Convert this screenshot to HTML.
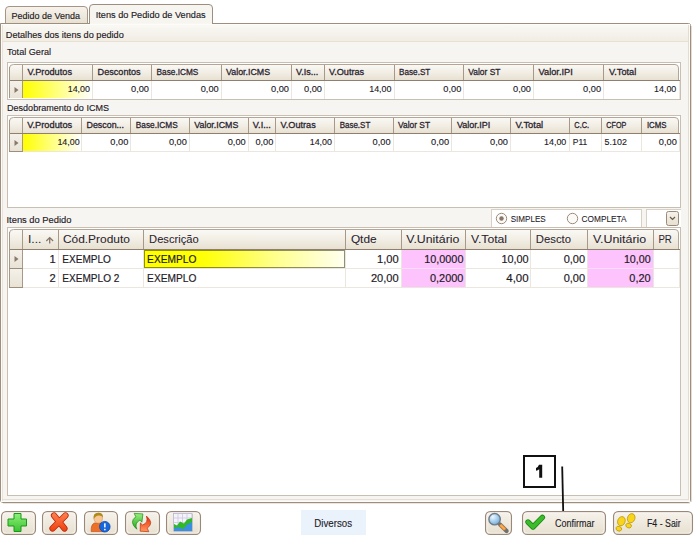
<!DOCTYPE html><html><head><meta charset="utf-8"><style>html,body{margin:0;padding:0;background:#fff;width:700px;height:545px;overflow:hidden}svg{display:block}text{font-family:"Liberation Sans",sans-serif}</style></head><body>
<svg width="700" height="545" viewBox="0 0 700 545">
<defs>
<linearGradient id="tabg" x1="0" y1="0" x2="0" y2="1"><stop offset="0" stop-color="#f7f4ee"/><stop offset="1" stop-color="#e7e0d1"/></linearGradient>
<linearGradient id="hdrband" x1="0" y1="0" x2="0" y2="1"><stop offset="0" stop-color="#faf9f5"/><stop offset="1" stop-color="#f1ede4"/></linearGradient>
<linearGradient id="ghdr" x1="0" y1="0" x2="0" y2="1"><stop offset="0" stop-color="#faf9f5"/><stop offset="0.5" stop-color="#f2eee5"/><stop offset="1" stop-color="#e7e0d0"/></linearGradient>
<linearGradient id="ind" x1="0" y1="0" x2="0" y2="1"><stop offset="0" stop-color="#f4f1ea"/><stop offset="1" stop-color="#e8e2d4"/></linearGradient>
<linearGradient id="yel" x1="0" y1="0" x2="1" y2="0"><stop offset="0" stop-color="#ffff00"/><stop offset="1" stop-color="#ffffff"/></linearGradient>
<linearGradient id="btn" x1="0" y1="0" x2="0" y2="1"><stop offset="0" stop-color="#f6f3ec"/><stop offset="1" stop-color="#e7e0d0"/></linearGradient>
<linearGradient id="grn" x1="0" y1="0" x2="0" y2="1"><stop offset="0" stop-color="#8ef07a"/><stop offset="1" stop-color="#3cc232"/></linearGradient>
<linearGradient id="red" gradientUnits="userSpaceOnUse" x1="0" y1="513" x2="0" y2="532"><stop offset="0" stop-color="#ff8050"/><stop offset="1" stop-color="#ee3c0c"/></linearGradient>
</defs>
<path d="M5.5,23.5 V10 Q5.5,6.5 9,6.5 H84 Q87.5,6.5 87.5,10 V23.5" fill="url(#tabg)" stroke="#a69484"/>
<rect x="691" y="26" width="1" height="476" fill="#e4ddd4"/>
<rect x="3" y="503" width="687" height="1" fill="#ebe6de"/>
<path d="M0.5,23.5 H688.5 Q690.5,23.5 690.5,25.5 V500 Q690.5,502.5 688,502.5 H3 Q0.5,502.5 0.5,500 Z" fill="#f7f5f1" stroke="#9d8e80"/>
<rect x="1" y="24" width="1" height="478" fill="#fdfcfa"/>
<rect x="2" y="24" width="1" height="477" fill="#e9e3d8"/>
<rect x="689" y="24" width="1" height="478" fill="#fdfcfa"/>
<rect x="688" y="24" width="1" height="476" fill="#e4dccf"/>
<rect x="2" y="501" width="687" height="1" fill="#fdfcfa"/>
<rect x="2" y="499" width="687" height="1" fill="#e6dfd3"/>
<path d="M89.5,24 V8 Q89.5,4.5 93,4.5 H209 Q212.5,4.5 212.5,8 V24" fill="#f7f5f0" stroke="#9d8e80"/>
<rect x="90" y="23" width="122" height="2" fill="#f8f7f2" />
<text x="11.5" y="19" font-size="9.6" text-anchor="start" fill="#1e1a26" font-weight="normal" textLength="68.5" lengthAdjust="spacingAndGlyphs" stroke="#1e1a26" stroke-width="0.15">Pedido de Venda</text>
<text x="95.7" y="18.2" font-size="9.6" text-anchor="start" fill="#1e1a26" font-weight="normal" textLength="110" lengthAdjust="spacingAndGlyphs" stroke="#1e1a26" stroke-width="0.15">Itens do Pedido de Vendas</text>
<rect x="3" y="24" width="685" height="17" fill="url(#hdrband)" />
<rect x="1" y="24" width="689" height="1" fill="#fdfcfa"/>
<rect x="3" y="41" width="685" height="1" fill="#e8e1d2"/>
<text x="5.8" y="37.8" font-size="9.6" text-anchor="start" fill="#1e1a26" font-weight="normal" textLength="118" lengthAdjust="spacingAndGlyphs" stroke="#1e1a26" stroke-width="0.15">Detalhes dos itens do pedido</text>
<text x="7" y="55.2" font-size="9.8" text-anchor="start" fill="#1e1a26" font-weight="normal" textLength="44" lengthAdjust="spacingAndGlyphs" stroke="#1e1a26" stroke-width="0.15">Total Geral</text>
<text x="7" y="110.5" font-size="9.6" text-anchor="start" fill="#1e1a26" font-weight="normal" textLength="102" lengthAdjust="spacingAndGlyphs" stroke="#1e1a26" stroke-width="0.15">Desdobramento do ICMS</text>
<text x="6.5" y="222.7" font-size="9.6" text-anchor="start" fill="#1e1a26" font-weight="normal" textLength="65" lengthAdjust="spacingAndGlyphs" stroke="#1e1a26" stroke-width="0.15">Itens do Pedido</text>
<rect x="23" y="81" width="69" height="17" fill="url(#yel)" />
<rect x="7" y="62" width="674" height="38" fill="#ffffff" />
<rect x="7" y="62" width="674" height="1" fill="#c9beb2"/>
<rect x="7" y="62" width="1" height="38" fill="#c9beb2"/>
<rect x="7" y="99" width="674" height="1" fill="#c9beb2"/>
<rect x="680" y="62" width="1" height="38" fill="#c9beb2"/>
<path d="M9.5,80.5 V68 Q9.5,64.5 13.5,64.5 H675 Q678.5,64.5 678.5,68 V80.5 Z" fill="url(#ghdr)" stroke="#b4a696"/>
<rect x="9" y="80" width="671" height="1" fill="#8f7f70"/>
<rect x="22" y="65" width="1" height="15" fill="#a89888"/>
<rect x="92" y="65" width="1" height="15" fill="#a89888"/>
<rect x="151" y="65" width="1" height="15" fill="#a89888"/>
<rect x="221" y="65" width="1" height="15" fill="#a89888"/>
<rect x="291" y="65" width="1" height="15" fill="#a89888"/>
<rect x="324" y="65" width="1" height="15" fill="#a89888"/>
<rect x="394" y="65" width="1" height="15" fill="#a89888"/>
<rect x="463" y="65" width="1" height="15" fill="#a89888"/>
<rect x="533" y="65" width="1" height="15" fill="#a89888"/>
<rect x="603" y="65" width="1" height="15" fill="#a89888"/>
<rect x="9" y="67" width="1" height="31" fill="#a89888"/>
<rect x="10" y="81" width="12" height="18" fill="url(#ind)" />
<rect x="22" y="81" width="1" height="18" fill="#a89888"/>
<rect x="9" y="98" width="14" height="1" fill="#ffffff"/>
<rect x="23" y="98" width="656" height="1" fill="#ffffff"/>
<rect x="92" y="81" width="1" height="18" fill="#ebe7de"/>
<rect x="151" y="81" width="1" height="18" fill="#ebe7de"/>
<rect x="221" y="81" width="1" height="18" fill="#ebe7de"/>
<rect x="291" y="81" width="1" height="18" fill="#ebe7de"/>
<rect x="324" y="81" width="1" height="18" fill="#ebe7de"/>
<rect x="394" y="81" width="1" height="18" fill="#ebe7de"/>
<rect x="463" y="81" width="1" height="18" fill="#ebe7de"/>
<rect x="533" y="81" width="1" height="18" fill="#ebe7de"/>
<rect x="603" y="81" width="1" height="18" fill="#ebe7de"/>
<rect x="679" y="81" width="1" height="18" fill="#ebe7de"/>
<text x="27.4" y="75" font-size="8.5" text-anchor="start" fill="#2b2530" font-weight="normal" textLength="44.6" lengthAdjust="spacingAndGlyphs" stroke="#2b2530" stroke-width="0.28">V.Produtos</text>
<text x="97.6" y="75" font-size="8.5" text-anchor="start" fill="#2b2530" font-weight="normal" textLength="43" lengthAdjust="spacingAndGlyphs" stroke="#2b2530" stroke-width="0.28">Descontos</text>
<text x="156.6" y="75" font-size="8.5" text-anchor="start" fill="#2b2530" font-weight="normal" textLength="41.7" lengthAdjust="spacingAndGlyphs" stroke="#2b2530" stroke-width="0.28">Base.ICMS</text>
<text x="226.1" y="75" font-size="8.5" text-anchor="start" fill="#2b2530" font-weight="normal" textLength="44" lengthAdjust="spacingAndGlyphs" stroke="#2b2530" stroke-width="0.28">Valor.ICMS</text>
<text x="296" y="75" font-size="8.5" text-anchor="start" fill="#2b2530" font-weight="normal" textLength="22.3" lengthAdjust="spacingAndGlyphs" stroke="#2b2530" stroke-width="0.28">V.Is...</text>
<text x="328.9" y="75" font-size="8.5" text-anchor="start" fill="#2b2530" font-weight="normal" textLength="35.3" lengthAdjust="spacingAndGlyphs" stroke="#2b2530" stroke-width="0.28">V.Outras</text>
<text x="399.1" y="75" font-size="8.5" text-anchor="start" fill="#2b2530" font-weight="normal" textLength="31.2" lengthAdjust="spacingAndGlyphs" stroke="#2b2530" stroke-width="0.28">Base.ST</text>
<text x="468.3" y="75" font-size="8.5" text-anchor="start" fill="#2b2530" font-weight="normal" textLength="32.2" lengthAdjust="spacingAndGlyphs" stroke="#2b2530" stroke-width="0.28">Valor ST</text>
<text x="538.5" y="75" font-size="8.5" text-anchor="start" fill="#2b2530" font-weight="normal" textLength="34.3" lengthAdjust="spacingAndGlyphs" stroke="#2b2530" stroke-width="0.28">Valor.IPI</text>
<text x="608.9" y="75" font-size="8.5" text-anchor="start" fill="#2b2530" font-weight="normal" textLength="27.4" lengthAdjust="spacingAndGlyphs" stroke="#2b2530" stroke-width="0.28">V.Total</text>
<rect x="23" y="81" width="69" height="17" fill="url(#yel)" />
<path d="M14.5,87 L18.5,90 L14.5,93 Z" fill="#8a7868"/>
<text x="90" y="92" font-size="9" text-anchor="end" fill="#1e1a26" font-weight="normal" textLength="22.3" lengthAdjust="spacingAndGlyphs" stroke="#1e1a26" stroke-width="0.12">14,00</text>
<text x="149" y="92" font-size="9" text-anchor="end" fill="#1e1a26" font-weight="normal" textLength="18" lengthAdjust="spacingAndGlyphs" stroke="#1e1a26" stroke-width="0.12">0,00</text>
<text x="218.7" y="92" font-size="9" text-anchor="end" fill="#1e1a26" font-weight="normal" textLength="18" lengthAdjust="spacingAndGlyphs" stroke="#1e1a26" stroke-width="0.12">0,00</text>
<text x="289" y="92" font-size="9" text-anchor="end" fill="#1e1a26" font-weight="normal" textLength="18" lengthAdjust="spacingAndGlyphs" stroke="#1e1a26" stroke-width="0.12">0,00</text>
<text x="322" y="92" font-size="9" text-anchor="end" fill="#1e1a26" font-weight="normal" textLength="18" lengthAdjust="spacingAndGlyphs" stroke="#1e1a26" stroke-width="0.12">0,00</text>
<text x="391.5" y="92" font-size="9" text-anchor="end" fill="#1e1a26" font-weight="normal" textLength="22.3" lengthAdjust="spacingAndGlyphs" stroke="#1e1a26" stroke-width="0.12">14,00</text>
<text x="461.3" y="92" font-size="9" text-anchor="end" fill="#1e1a26" font-weight="normal" textLength="18" lengthAdjust="spacingAndGlyphs" stroke="#1e1a26" stroke-width="0.12">0,00</text>
<text x="531" y="92" font-size="9" text-anchor="end" fill="#1e1a26" font-weight="normal" textLength="18" lengthAdjust="spacingAndGlyphs" stroke="#1e1a26" stroke-width="0.12">0,00</text>
<text x="601.1" y="92" font-size="9" text-anchor="end" fill="#1e1a26" font-weight="normal" textLength="18" lengthAdjust="spacingAndGlyphs" stroke="#1e1a26" stroke-width="0.12">0,00</text>
<text x="676.3" y="92" font-size="9" text-anchor="end" fill="#1e1a26" font-weight="normal" textLength="22.3" lengthAdjust="spacingAndGlyphs" stroke="#1e1a26" stroke-width="0.12">14,00</text>
<rect x="7" y="115" width="674" height="93" fill="#ffffff" />
<rect x="7" y="115" width="674" height="1" fill="#c9beb2"/>
<rect x="7" y="115" width="1" height="93" fill="#c9beb2"/>
<rect x="7" y="207" width="674" height="1" fill="#c9beb2"/>
<rect x="680" y="115" width="1" height="93" fill="#c9beb2"/>
<path d="M9.5,133.5 V121 Q9.5,117.5 13.5,117.5 H675 Q678.5,117.5 678.5,121 V133.5 Z" fill="url(#ghdr)" stroke="#b4a696"/>
<rect x="9" y="133" width="671" height="1" fill="#8f7f70"/>
<rect x="22" y="118" width="1" height="15" fill="#a89888"/>
<rect x="81" y="118" width="1" height="15" fill="#a89888"/>
<rect x="130" y="118" width="1" height="15" fill="#a89888"/>
<rect x="189" y="118" width="1" height="15" fill="#a89888"/>
<rect x="248" y="118" width="1" height="15" fill="#a89888"/>
<rect x="275" y="118" width="1" height="15" fill="#a89888"/>
<rect x="334" y="118" width="1" height="15" fill="#a89888"/>
<rect x="393" y="118" width="1" height="15" fill="#a89888"/>
<rect x="451" y="118" width="1" height="15" fill="#a89888"/>
<rect x="510" y="118" width="1" height="15" fill="#a89888"/>
<rect x="569" y="118" width="1" height="15" fill="#a89888"/>
<rect x="601" y="118" width="1" height="15" fill="#a89888"/>
<rect x="641" y="118" width="1" height="15" fill="#a89888"/>
<rect x="9" y="120" width="1" height="32" fill="#a89888"/>
<rect x="10" y="134" width="12" height="18" fill="url(#ind)" />
<rect x="22" y="134" width="1" height="18" fill="#a89888"/>
<rect x="9" y="151" width="14" height="1" fill="#9d8d7d"/>
<rect x="23" y="151" width="656" height="1" fill="#ebe7de"/>
<rect x="81" y="134" width="1" height="18" fill="#ebe7de"/>
<rect x="130" y="134" width="1" height="18" fill="#ebe7de"/>
<rect x="189" y="134" width="1" height="18" fill="#ebe7de"/>
<rect x="248" y="134" width="1" height="18" fill="#ebe7de"/>
<rect x="275" y="134" width="1" height="18" fill="#ebe7de"/>
<rect x="334" y="134" width="1" height="18" fill="#ebe7de"/>
<rect x="393" y="134" width="1" height="18" fill="#ebe7de"/>
<rect x="451" y="134" width="1" height="18" fill="#ebe7de"/>
<rect x="510" y="134" width="1" height="18" fill="#ebe7de"/>
<rect x="569" y="134" width="1" height="18" fill="#ebe7de"/>
<rect x="601" y="134" width="1" height="18" fill="#ebe7de"/>
<rect x="641" y="134" width="1" height="18" fill="#ebe7de"/>
<rect x="679" y="134" width="1" height="18" fill="#ebe7de"/>
<text x="27.2" y="128" font-size="8.5" text-anchor="start" fill="#2b2530" font-weight="normal" textLength="45" lengthAdjust="spacingAndGlyphs" stroke="#2b2530" stroke-width="0.28">V.Produtos</text>
<text x="86.5" y="128" font-size="8.5" text-anchor="start" fill="#2b2530" font-weight="normal" textLength="37.5" lengthAdjust="spacingAndGlyphs" stroke="#2b2530" stroke-width="0.28">Descon...</text>
<text x="135.8" y="128" font-size="8.5" text-anchor="start" fill="#2b2530" font-weight="normal" textLength="41.9" lengthAdjust="spacingAndGlyphs" stroke="#2b2530" stroke-width="0.28">Base.ICMS</text>
<text x="194.3" y="128" font-size="8.5" text-anchor="start" fill="#2b2530" font-weight="normal" textLength="44" lengthAdjust="spacingAndGlyphs" stroke="#2b2530" stroke-width="0.28">Valor.ICMS</text>
<text x="252.8" y="128" font-size="8.5" text-anchor="start" fill="#2b2530" font-weight="normal" textLength="18.1" lengthAdjust="spacingAndGlyphs" stroke="#2b2530" stroke-width="0.28">V.I...</text>
<text x="280.6" y="128" font-size="8.5" text-anchor="start" fill="#2b2530" font-weight="normal" textLength="35.1" lengthAdjust="spacingAndGlyphs" stroke="#2b2530" stroke-width="0.28">V.Outras</text>
<text x="339.7" y="128" font-size="8.5" text-anchor="start" fill="#2b2530" font-weight="normal" textLength="30.6" lengthAdjust="spacingAndGlyphs" stroke="#2b2530" stroke-width="0.28">Base.ST</text>
<text x="398" y="128" font-size="8.5" text-anchor="start" fill="#2b2530" font-weight="normal" textLength="32" lengthAdjust="spacingAndGlyphs" stroke="#2b2530" stroke-width="0.28">Valor ST</text>
<text x="456.9" y="128" font-size="8.5" text-anchor="start" fill="#2b2530" font-weight="normal" textLength="33.4" lengthAdjust="spacingAndGlyphs" stroke="#2b2530" stroke-width="0.28">Valor.IPI</text>
<text x="515.4" y="128" font-size="8.5" text-anchor="start" fill="#2b2530" font-weight="normal" textLength="27.8" lengthAdjust="spacingAndGlyphs" stroke="#2b2530" stroke-width="0.28">V.Total</text>
<text x="574.3" y="128" font-size="8.5" text-anchor="start" fill="#2b2530" font-weight="normal" textLength="14.8" lengthAdjust="spacingAndGlyphs" stroke="#2b2530" stroke-width="0.28">C.C.</text>
<text x="606.3" y="128" font-size="8.5" text-anchor="start" fill="#2b2530" font-weight="normal" textLength="20" lengthAdjust="spacingAndGlyphs" stroke="#2b2530" stroke-width="0.28">CFOP</text>
<text x="646.9" y="128" font-size="8.5" text-anchor="start" fill="#2b2530" font-weight="normal" textLength="19.6" lengthAdjust="spacingAndGlyphs" stroke="#2b2530" stroke-width="0.28">ICMS</text>
<rect x="23" y="134" width="58" height="17" fill="url(#yel)" />
<path d="M14.5,140 L18.5,143 L14.5,146 Z" fill="#8a7868"/>
<text x="79.7" y="145" font-size="9" text-anchor="end" fill="#1e1a26" font-weight="normal" textLength="22.3" lengthAdjust="spacingAndGlyphs" stroke="#1e1a26" stroke-width="0.12">14,00</text>
<text x="128.3" y="145" font-size="9" text-anchor="end" fill="#1e1a26" font-weight="normal" textLength="18" lengthAdjust="spacingAndGlyphs" stroke="#1e1a26" stroke-width="0.12">0,00</text>
<text x="186.9" y="145" font-size="9" text-anchor="end" fill="#1e1a26" font-weight="normal" textLength="18" lengthAdjust="spacingAndGlyphs" stroke="#1e1a26" stroke-width="0.12">0,00</text>
<text x="245.7" y="145" font-size="9" text-anchor="end" fill="#1e1a26" font-weight="normal" textLength="18" lengthAdjust="spacingAndGlyphs" stroke="#1e1a26" stroke-width="0.12">0,00</text>
<text x="273.4" y="145" font-size="9" text-anchor="end" fill="#1e1a26" font-weight="normal" textLength="18" lengthAdjust="spacingAndGlyphs" stroke="#1e1a26" stroke-width="0.12">0,00</text>
<text x="332" y="145" font-size="9" text-anchor="end" fill="#1e1a26" font-weight="normal" textLength="22.3" lengthAdjust="spacingAndGlyphs" stroke="#1e1a26" stroke-width="0.12">14,00</text>
<text x="390.6" y="145" font-size="9" text-anchor="end" fill="#1e1a26" font-weight="normal" textLength="18" lengthAdjust="spacingAndGlyphs" stroke="#1e1a26" stroke-width="0.12">0,00</text>
<text x="449.1" y="145" font-size="9" text-anchor="end" fill="#1e1a26" font-weight="normal" textLength="18" lengthAdjust="spacingAndGlyphs" stroke="#1e1a26" stroke-width="0.12">0,00</text>
<text x="508" y="145" font-size="9" text-anchor="end" fill="#1e1a26" font-weight="normal" textLength="18" lengthAdjust="spacingAndGlyphs" stroke="#1e1a26" stroke-width="0.12">0,00</text>
<text x="566.3" y="145" font-size="9" text-anchor="end" fill="#1e1a26" font-weight="normal" textLength="22.3" lengthAdjust="spacingAndGlyphs" stroke="#1e1a26" stroke-width="0.12">14,00</text>
<text x="676.8" y="145" font-size="9" text-anchor="end" fill="#1e1a26" font-weight="normal" textLength="18" lengthAdjust="spacingAndGlyphs" stroke="#1e1a26" stroke-width="0.12">0,00</text>
<text x="572.8" y="145" font-size="9" text-anchor="start" fill="#1e1a26" font-weight="normal" textLength="14.4" lengthAdjust="spacingAndGlyphs" stroke="#1e1a26" stroke-width="0.12">P11</text>
<text x="604.6" y="145" font-size="9" text-anchor="start" fill="#1e1a26" font-weight="normal" textLength="22.3" lengthAdjust="spacingAndGlyphs" stroke="#1e1a26" stroke-width="0.12">5.102</text>
<rect x="491" y="209" width="150" height="19" fill="#ffffff" />
<rect x="491" y="209" width="1" height="19" fill="#d8d0c4"/>
<rect x="491" y="209" width="151" height="1" fill="#d8d0c4"/>
<rect x="641" y="209" width="1" height="19" fill="#d8d0c4"/>
<circle cx="501.5" cy="218.5" r="5.2" fill="#fbfaf6" stroke="#9a8a7c" stroke-width="1"/>
<circle cx="501.5" cy="218.5" r="2.2" fill="#8a7666"/>
<text x="510.7" y="222" font-size="9.5" text-anchor="start" fill="#1e1a26" font-weight="normal" textLength="35" lengthAdjust="spacingAndGlyphs" stroke="#1e1a26" stroke-width="0.08">SIMPLES</text>
<circle cx="572.5" cy="218.5" r="5.2" fill="#fbfaf6" stroke="#9a8a7c" stroke-width="1"/>
<text x="581.6" y="222" font-size="9.5" text-anchor="start" fill="#1e1a26" font-weight="normal" textLength="45" lengthAdjust="spacingAndGlyphs" stroke="#1e1a26" stroke-width="0.08">COMPLETA</text>
<rect x="646" y="209" width="35" height="19" fill="#ffffff" />
<rect x="646" y="209" width="1" height="19" fill="#d8d0c4"/>
<rect x="646" y="209" width="35" height="1" fill="#d8d0c4"/>
<rect x="666.5" y="211.5" width="12" height="14" rx="2" fill="url(#btn)" stroke="#9a8a7c"/>
<path d="M670,217 L672.5,219.5 L675,217" fill="none" stroke="#6a5a4c" stroke-width="1.2"/>
<rect x="7" y="227" width="674" height="269" fill="#ffffff" />
<rect x="7" y="227" width="674" height="1" fill="#c9beb2"/>
<rect x="7" y="227" width="1" height="269" fill="#c9beb2"/>
<rect x="7" y="495" width="674" height="1" fill="#c9beb2"/>
<rect x="680" y="227" width="1" height="269" fill="#c9beb2"/>
<path d="M9.5,249.5 V233 Q9.5,229.5 13.5,229.5 H675 Q678.5,229.5 678.5,233 V249.5 Z" fill="url(#ghdr)" stroke="#b4a696"/>
<rect x="9" y="249" width="671" height="1" fill="#8f7f70"/>
<rect x="22" y="230" width="1" height="19" fill="#a89888"/>
<rect x="58" y="230" width="1" height="19" fill="#a89888"/>
<rect x="143" y="230" width="1" height="19" fill="#a89888"/>
<rect x="345" y="230" width="1" height="19" fill="#a89888"/>
<rect x="401" y="230" width="1" height="19" fill="#a89888"/>
<rect x="465" y="230" width="1" height="19" fill="#a89888"/>
<rect x="530" y="230" width="1" height="19" fill="#a89888"/>
<rect x="587" y="230" width="1" height="19" fill="#a89888"/>
<rect x="653" y="230" width="1" height="19" fill="#a89888"/>
<rect x="9" y="232" width="1" height="56" fill="#a89888"/>
<rect x="10" y="250" width="12" height="19" fill="url(#ind)" />
<rect x="22" y="250" width="1" height="19" fill="#a89888"/>
<rect x="9" y="268" width="14" height="1" fill="#9d8d7d"/>
<rect x="10" y="269" width="12" height="19" fill="url(#ind)" />
<rect x="22" y="269" width="1" height="19" fill="#a89888"/>
<rect x="9" y="287" width="14" height="1" fill="#9d8d7d"/>
<rect x="23" y="268" width="656" height="1" fill="#ebe7de"/>
<rect x="58" y="250" width="1" height="19" fill="#ebe7de"/>
<rect x="143" y="250" width="1" height="19" fill="#ebe7de"/>
<rect x="345" y="250" width="1" height="19" fill="#ebe7de"/>
<rect x="401" y="250" width="1" height="19" fill="#ebe7de"/>
<rect x="465" y="250" width="1" height="19" fill="#ebe7de"/>
<rect x="530" y="250" width="1" height="19" fill="#ebe7de"/>
<rect x="587" y="250" width="1" height="19" fill="#ebe7de"/>
<rect x="653" y="250" width="1" height="19" fill="#ebe7de"/>
<rect x="679" y="250" width="1" height="19" fill="#ebe7de"/>
<rect x="23" y="287" width="656" height="1" fill="#ebe7de"/>
<rect x="58" y="269" width="1" height="19" fill="#ebe7de"/>
<rect x="143" y="269" width="1" height="19" fill="#ebe7de"/>
<rect x="345" y="269" width="1" height="19" fill="#ebe7de"/>
<rect x="401" y="269" width="1" height="19" fill="#ebe7de"/>
<rect x="465" y="269" width="1" height="19" fill="#ebe7de"/>
<rect x="530" y="269" width="1" height="19" fill="#ebe7de"/>
<rect x="587" y="269" width="1" height="19" fill="#ebe7de"/>
<rect x="653" y="269" width="1" height="19" fill="#ebe7de"/>
<rect x="679" y="269" width="1" height="19" fill="#ebe7de"/>
<text x="28" y="243.2" font-size="11" text-anchor="start" fill="#2b2530" font-weight="normal" textLength="13.4" lengthAdjust="spacingAndGlyphs" stroke="#2b2530" stroke-width="0.06">I...</text>
<text x="62.9" y="243.2" font-size="11" text-anchor="start" fill="#2b2530" font-weight="normal" textLength="67" lengthAdjust="spacingAndGlyphs" stroke="#2b2530" stroke-width="0.06">Cód.Produto</text>
<text x="149.1" y="243.2" font-size="11" text-anchor="start" fill="#2b2530" font-weight="normal" textLength="49.5" lengthAdjust="spacingAndGlyphs" stroke="#2b2530" stroke-width="0.06">Descrição</text>
<text x="350.9" y="243.2" font-size="11" text-anchor="start" fill="#2b2530" font-weight="normal" textLength="25.7" lengthAdjust="spacingAndGlyphs" stroke="#2b2530" stroke-width="0.06">Qtde</text>
<text x="406.3" y="243.2" font-size="11" text-anchor="start" fill="#2b2530" font-weight="normal" textLength="53.1" lengthAdjust="spacingAndGlyphs" stroke="#2b2530" stroke-width="0.06">V.Unitário</text>
<text x="470.9" y="243.2" font-size="11" text-anchor="start" fill="#2b2530" font-weight="normal" textLength="36.2" lengthAdjust="spacingAndGlyphs" stroke="#2b2530" stroke-width="0.06">V.Total</text>
<text x="535.8" y="243.2" font-size="11" text-anchor="start" fill="#2b2530" font-weight="normal" textLength="35.2" lengthAdjust="spacingAndGlyphs" stroke="#2b2530" stroke-width="0.06">Descto</text>
<text x="592.9" y="243.2" font-size="11" text-anchor="start" fill="#2b2530" font-weight="normal" textLength="53.4" lengthAdjust="spacingAndGlyphs" stroke="#2b2530" stroke-width="0.06">V.Unitário</text>
<text x="658.4" y="243.2" font-size="11" text-anchor="start" fill="#2b2530" font-weight="normal" textLength="13.4" lengthAdjust="spacingAndGlyphs" stroke="#2b2530" stroke-width="0.06">PR</text>
<path d="M46.3,241 L49.7,237.6 L53.1,241 M49.7,238 V243.6" fill="none" stroke="#86766a" stroke-width="1.3"/>
<path d="M14.5,256 L18.5,259 L14.5,262 Z" fill="#8a7868"/>
<rect x="402" y="250" width="63" height="37" fill="#fcc3fc" />
<rect x="402" y="268" width="63" height="1" fill="#fbdcfb"/>
<rect x="588" y="250" width="65" height="37" fill="#fcc3fc" />
<rect x="588" y="268" width="65" height="1" fill="#fbdcfb"/>
<linearGradient id="yel3" x1="0" y1="0" x2="1" y2="0"><stop offset="0" stop-color="#ffff00"/><stop offset="0.3" stop-color="#ffff08"/><stop offset="0.65" stop-color="#ffff8c"/><stop offset="1" stop-color="#fffff2"/></linearGradient>
<rect x="144" y="250" width="201" height="18" fill="url(#yel3)" />
<rect x="144.5" y="250.5" width="200" height="17" fill="none" stroke="#202000" stroke-width="1" stroke-dasharray="1,1"/>
<text x="55.7" y="262.8" font-size="11" text-anchor="end" fill="#1e1a26" font-weight="normal" textLength="6.2" lengthAdjust="spacingAndGlyphs" stroke="#1e1a26" stroke-width="0.18">1</text>
<text x="55.7" y="281.9" font-size="11" text-anchor="end" fill="#1e1a26" font-weight="normal" textLength="6.2" lengthAdjust="spacingAndGlyphs" stroke="#1e1a26" stroke-width="0.18">2</text>
<text x="62.3" y="262.8" font-size="11" text-anchor="start" fill="#1e1a26" font-weight="normal" textLength="48.6" lengthAdjust="spacingAndGlyphs" stroke="#1e1a26" stroke-width="0.18">EXEMPLO</text>
<text x="62.3" y="281.9" font-size="11" text-anchor="start" fill="#1e1a26" font-weight="normal" textLength="57.1" lengthAdjust="spacingAndGlyphs" stroke="#1e1a26" stroke-width="0.18">EXEMPLO 2</text>
<text x="147.1" y="262.8" font-size="11" text-anchor="start" fill="#1e1a26" font-weight="normal" textLength="49.2" lengthAdjust="spacingAndGlyphs" stroke="#1e1a26" stroke-width="0.18">EXEMPLO</text>
<text x="147.1" y="281.9" font-size="11" text-anchor="start" fill="#1e1a26" font-weight="normal" textLength="49.2" lengthAdjust="spacingAndGlyphs" stroke="#1e1a26" stroke-width="0.18">EXEMPLO</text>
<text x="398.6" y="262.8" font-size="11" text-anchor="end" fill="#1e1a26" font-weight="normal" textLength="21.6" lengthAdjust="spacingAndGlyphs" stroke="#1e1a26" stroke-width="0.18">1,00</text>
<text x="398.6" y="281.9" font-size="11" text-anchor="end" fill="#1e1a26" font-weight="normal" textLength="27.7" lengthAdjust="spacingAndGlyphs" stroke="#1e1a26" stroke-width="0.18">20,00</text>
<text x="463.4" y="262.8" font-size="11" text-anchor="end" fill="#1e1a26" font-weight="normal" textLength="39.1" lengthAdjust="spacingAndGlyphs" stroke="#1e1a26" stroke-width="0.18">10,0000</text>
<text x="463.4" y="281.9" font-size="11" text-anchor="end" fill="#1e1a26" font-weight="normal" textLength="33.4" lengthAdjust="spacingAndGlyphs" stroke="#1e1a26" stroke-width="0.18">0,2000</text>
<text x="528.6" y="262.8" font-size="11" text-anchor="end" fill="#1e1a26" font-weight="normal" textLength="27.2" lengthAdjust="spacingAndGlyphs" stroke="#1e1a26" stroke-width="0.18">10,00</text>
<text x="528.6" y="281.9" font-size="11" text-anchor="end" fill="#1e1a26" font-weight="normal" textLength="22.3" lengthAdjust="spacingAndGlyphs" stroke="#1e1a26" stroke-width="0.18">4,00</text>
<text x="585.1" y="262.8" font-size="11" text-anchor="end" fill="#1e1a26" font-weight="normal" textLength="21.4" lengthAdjust="spacingAndGlyphs" stroke="#1e1a26" stroke-width="0.18">0,00</text>
<text x="585.1" y="281.9" font-size="11" text-anchor="end" fill="#1e1a26" font-weight="normal" textLength="21.4" lengthAdjust="spacingAndGlyphs" stroke="#1e1a26" stroke-width="0.18">0,00</text>
<text x="650.6" y="262.8" font-size="11" text-anchor="end" fill="#1e1a26" font-weight="normal" textLength="26.7" lengthAdjust="spacingAndGlyphs" stroke="#1e1a26" stroke-width="0.18">10,00</text>
<text x="650.6" y="281.9" font-size="11" text-anchor="end" fill="#1e1a26" font-weight="normal" textLength="21.3" lengthAdjust="spacingAndGlyphs" stroke="#1e1a26" stroke-width="0.18">0,20</text>
<rect x="1.6" y="511.6" width="33.8" height="22.8" rx="4.5" fill="url(#btn)" stroke="#9c8878" stroke-width="1.25"/>
<rect x="2.8" y="512.8" width="31.4" height="20.4" rx="3.5" fill="none" stroke="#fdfcf8" stroke-width="0.8" opacity="0.8"/>
<rect x="42.6" y="511.6" width="33.8" height="22.8" rx="4.5" fill="url(#btn)" stroke="#9c8878" stroke-width="1.25"/>
<rect x="43.8" y="512.8" width="31.4" height="20.4" rx="3.5" fill="none" stroke="#fdfcf8" stroke-width="0.8" opacity="0.8"/>
<rect x="84.6" y="511.6" width="32.8" height="22.8" rx="4.5" fill="url(#btn)" stroke="#9c8878" stroke-width="1.25"/>
<rect x="85.8" y="512.8" width="30.4" height="20.4" rx="3.5" fill="none" stroke="#fdfcf8" stroke-width="0.8" opacity="0.8"/>
<rect x="125.6" y="511.6" width="33.8" height="22.8" rx="4.5" fill="url(#btn)" stroke="#9c8878" stroke-width="1.25"/>
<rect x="126.8" y="512.8" width="31.4" height="20.4" rx="3.5" fill="none" stroke="#fdfcf8" stroke-width="0.8" opacity="0.8"/>
<rect x="166.6" y="511.6" width="33.8" height="22.8" rx="4.5" fill="url(#btn)" stroke="#9c8878" stroke-width="1.25"/>
<rect x="167.8" y="512.8" width="31.4" height="20.4" rx="3.5" fill="none" stroke="#fdfcf8" stroke-width="0.8" opacity="0.8"/>
<rect x="485.6" y="511.6" width="25.8" height="22.8" rx="4.5" fill="url(#btn)" stroke="#9c8878" stroke-width="1.25"/>
<rect x="486.8" y="512.8" width="23.4" height="20.4" rx="3.5" fill="none" stroke="#fdfcf8" stroke-width="0.8" opacity="0.8"/>
<rect x="522.6" y="511.6" width="82.8" height="22.8" rx="4.5" fill="url(#btn)" stroke="#9c8878" stroke-width="1.25"/>
<rect x="523.8" y="512.8" width="80.4" height="20.4" rx="3.5" fill="none" stroke="#fdfcf8" stroke-width="0.8" opacity="0.8"/>
<rect x="613.6" y="511.6" width="78.8" height="22.8" rx="4.5" fill="url(#btn)" stroke="#9c8878" stroke-width="1.25"/>
<rect x="614.8" y="512.8" width="76.4" height="20.4" rx="3.5" fill="none" stroke="#fdfcf8" stroke-width="0.8" opacity="0.8"/>
<path d="M14,513.5 H21 V519 H26.5 V526 H21 V531.5 H14 V526 H8 V519 H14 Z" fill="url(#grn)" stroke="#169a16" stroke-width="1"/>
<g stroke-linecap="round"><path d="M54,515.5 L64.5,528.5 M65.5,515.5 L52.5,528.5" stroke="#b82808" stroke-width="6.2" fill="none"/><path d="M54,515.5 L64.5,528.5 M65.5,515.5 L52.5,528.5" stroke="url(#red)" stroke-width="4.6" fill="none"/></g>
<path d="M91.2,531.6 Q90.8,524.4 94.5,523 L101.5,523 Q104.5,524.4 104.5,531.6 Z" fill="#ee7028" stroke="#c0501a" stroke-width="0.7"/>
<ellipse cx="98.2" cy="518.2" rx="4.3" ry="5" fill="#f9c592" stroke="#c98a50" stroke-width="0.5"/>
<path d="M93.8,519 Q92.6,512.8 98.4,512.8 Q103.6,512.8 102.8,517.5 Q101.8,515.2 98.6,515.4 Q95.6,515.6 93.8,519 Z" fill="#b08a18"/>
<circle cx="104.8" cy="526.7" r="5.3" fill="#1668dc" stroke="#0c48a8" stroke-width="0.8"/>
<rect x="104.1" y="523.3" width="1.5" height="4.1" fill="#fff"/><rect x="104.1" y="528.8" width="1.5" height="1.5" fill="#fff"/>
<linearGradient id="ga" x1="0" y1="0" x2="0" y2="1"><stop offset="0" stop-color="#9af080"/><stop offset="1" stop-color="#20a818"/></linearGradient><linearGradient id="ra" x1="0" y1="0" x2="0" y2="1"><stop offset="0" stop-color="#e82a08"/><stop offset="1" stop-color="#ff9a60"/></linearGradient>
<path d="M136.8,529.2 Q128.6,522 135.8,516.8 L134.2,513.4 L142.9,513.9 L141.9,522.2 L139.9,520.1 Q134.2,523.2 136.8,529.2 Z" fill="url(#ga)" stroke="#1e8a16" stroke-width="0.7"/>
<path d="M146.4,516 Q154.6,523 147.2,528.2 L148.8,531.7 L140.2,531.2 L140.4,522.9 L142.6,525 Q148.8,522.8 146.4,516 Z" fill="url(#ra)" stroke="#b83210" stroke-width="0.7"/>
<rect x="174" y="514" width="18.5" height="17.5" fill="#a8a8b8"/>
<rect x="173.5" y="513.5" width="18.5" height="17.5" fill="#f4f2fa" stroke="#b8b4cc" stroke-width="0.8"/>
<path d="M173.5,518 H192 M173.5,522.5 H192 M173.5,527 H192 M178,513.5 V531 M182.5,513.5 V531 M187,513.5 V531" stroke="#c8c2dc" stroke-width="0.7"/>
<path d="M174,524 L177,525.5 L180,521.5 L184,523.5 L187,519.5 L192,518 V531 H174 Z" fill="#30b828"/>
<path d="M174,528.5 L178,527 L183.5,529 L187,524.5 L192,522 V531 H174 Z" fill="#3a8ee0"/>
<rect x="301" y="510" width="65" height="25" fill="#eaf3fc" />
<text x="314.3" y="527" font-size="10" text-anchor="start" fill="#1e1a26" font-weight="normal" textLength="37.7" lengthAdjust="spacingAndGlyphs" stroke="#1e1a26" stroke-width="0.12">Diversos</text>
<radialGradient id="lens" cx="0.35" cy="0.3" r="0.8"><stop offset="0" stop-color="#eef8ff"/><stop offset="0.5" stop-color="#a6d0f0"/><stop offset="1" stop-color="#6ea4d0"/></radialGradient>
<line x1="500" y1="524.5" x2="506.6" y2="531.1" stroke="#707070" stroke-width="4.2" stroke-linecap="round"/>
<line x1="500.3" y1="524.8" x2="505" y2="529.5" stroke="#f39030" stroke-width="3.2"/><line x1="500.3" y1="524.8" x2="505" y2="529.5" stroke="#ffd080" stroke-width="0.8"/>
<circle cx="494.6" cy="519.2" r="5.7" fill="url(#lens)" stroke="#6e7c88" stroke-width="1.4"/>
<path d="M528,522 L533,527 L542.4,517.4" fill="none" stroke="#1c8a14" stroke-width="5.4" stroke-linecap="round" stroke-linejoin="round"/>
<path d="M528,522 L533,527 L542.4,517.4" fill="none" stroke="#3cbc2c" stroke-width="3.8" stroke-linecap="round" stroke-linejoin="round"/>
<text x="555" y="527" font-size="10" text-anchor="start" fill="#1e1a26" font-weight="normal" textLength="39.6" lengthAdjust="spacingAndGlyphs" stroke="#1e1a26" stroke-width="0.12">Confirmar</text>
<ellipse cx="621.4" cy="521.2" rx="3.7" ry="4.7" transform="rotate(22 621.4 521.2)" fill="#f8d41c" stroke="#b89400" stroke-width="0.7"/>
<ellipse cx="618.8" cy="528.7" rx="2.9" ry="2.3" transform="rotate(22 618.8 528.7)" fill="#f8d41c" stroke="#b89400" stroke-width="0.7"/>
<ellipse cx="631.2" cy="518.2" rx="3.7" ry="4.7" transform="rotate(22 631.2 518.2)" fill="#f8d41c" stroke="#b89400" stroke-width="0.7"/>
<ellipse cx="628.6" cy="525.6" rx="2.9" ry="2.3" transform="rotate(22 628.6 525.6)" fill="#f8d41c" stroke="#b89400" stroke-width="0.7"/>
<text x="646.9" y="527" font-size="10" text-anchor="start" fill="#1e1a26" font-weight="normal" textLength="33.8" lengthAdjust="spacingAndGlyphs" stroke="#1e1a26" stroke-width="0.12">F4 - Sair</text>
<rect x="524" y="456" width="31" height="31" fill="#ffffff" stroke="#111" stroke-width="2"/>
<path d="M539,464.8 H542.2 V477.8 H539.2 V469.2 Q537.8,470.4 536,470.8 V468.1 Q538.2,467.2 539,464.8 Z" fill="#111"/>
<line x1="562.2" y1="466.5" x2="563.2" y2="511" stroke="#111" stroke-width="1.8"/>
</svg></body></html>
